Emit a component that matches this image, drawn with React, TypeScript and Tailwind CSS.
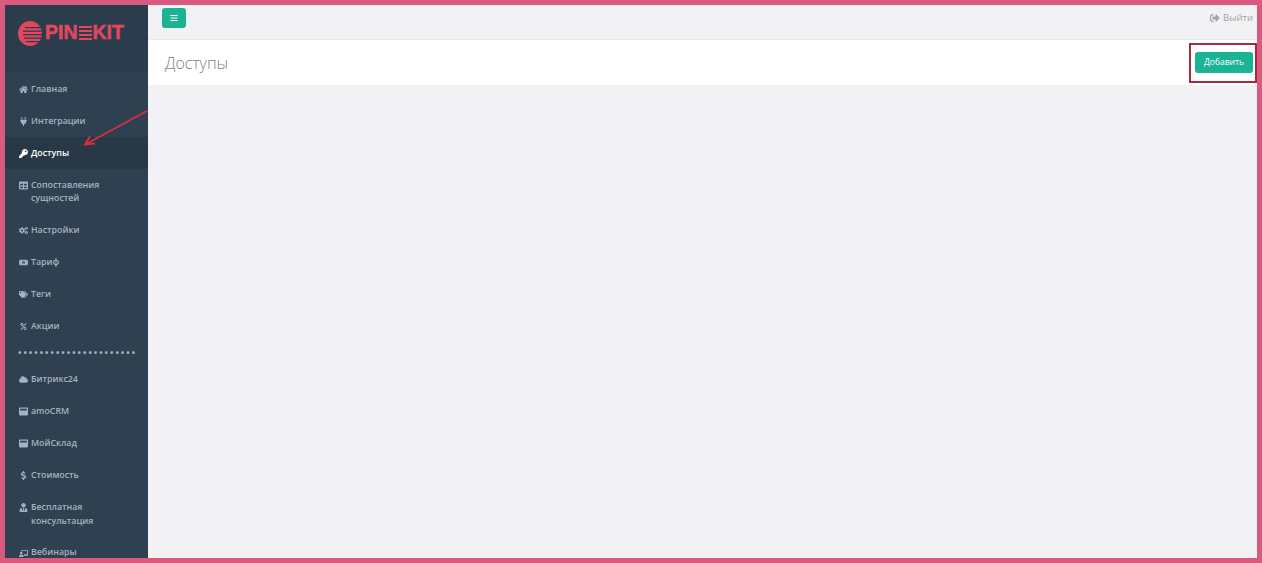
import { FaHome, FaPlug, FaKey, FaTable, FaCogs, FaMoneyBillAlt, FaTags, FaPercent, FaCloud, FaWindowMaximize, FaDollarSign, FaUserTie, FaChalkboardTeacher, FaBars, FaSignOutAlt } from "react-icons/fa";
import type { IconType } from "react-icons";

type Item = { label: string; second?: string; Icon: IconType; active?: boolean; iconSize?: number };

const topItems: Item[] = [
  { label: "Главная", Icon: FaHome },
  { label: "Интеграции", Icon: FaPlug },
  { label: "Доступы", Icon: FaKey, active: true },
  { label: "Сопоставления", second: "сущностей", Icon: FaTable },
  { label: "Настройки", Icon: FaCogs },
  { label: "Тариф", Icon: FaMoneyBillAlt },
  { label: "Теги", Icon: FaTags },
  { label: "Акции", Icon: FaPercent, iconSize: 7 },
];

const bottomItems: Item[] = [
  { label: "Битрикс24", Icon: FaCloud },
  { label: "amoCRM", Icon: FaWindowMaximize },
  { label: "МойСклад", Icon: FaWindowMaximize },
  { label: "Стоимость", Icon: FaDollarSign },
  { label: "Бесплатная", second: "консультация", Icon: FaUserTie },
  { label: "Вебинары", Icon: FaChalkboardTeacher },
];

function NavItem({ item }: { item: Item }) {
  const { Icon } = item;
  return (
    <a
      href="#"
      className={`flex items-start gap-[3px] pl-[13px] pt-[9.5px] pb-[8.5px] text-[8.8px] leading-[13.7px] font-semibold ${
        item.active ? "bg-[#293846] text-white" : "text-[#a7b1c2]"
      }`}
    >
      <span className="flex h-[14px] w-[10px] shrink-0 items-center justify-center">
        <Icon size={item.iconSize ?? 9} />
      </span>
      <span>
        {item.label}
        {item.second && <span className="block">{item.second}</span>}
      </span>
    </a>
  );
}

function Logo() {
  return (
    <div className="flex h-[68px] items-center bg-[#2b3c4c] pb-[12px] pl-[13px]">
      <svg width="24" height="25" viewBox="0 0 24 25" className="shrink-0">
        <ellipse cx="12" cy="12.5" rx="12" ry="12.5" fill="#e2475c" />
        <g fill="#2b3c4c">
          <rect x="7" y="6" width="17" height="1.2" />
          <rect x="5" y="9.5" width="19" height="1.3" />
          <rect x="5" y="13" width="19" height="1.3" />
          <rect x="6" y="16.5" width="18" height="1.3" />
          <rect x="8" y="20" width="16" height="1.2" />
        </g>
      </svg>
      <span className="ml-[3px] flex items-center font-['Liberation_Sans',sans-serif] text-[19.5px] leading-none font-bold text-[#e2475c] [-webkit-text-stroke:0.5px_#e2475c]">
        PIN
        <span className="mx-[1px] flex h-[14px] w-[13px] flex-col justify-between">
          <span className="h-[2px] bg-[#e2475c]" />
          <span className="h-[2px] bg-[#e2475c]" />
          <span className="h-[2px] bg-[#e2475c]" />
          <span className="h-[2px] bg-[#e2475c]" />
        </span>
        KIT
      </span>
    </div>
  );
}

export default function App() {
  return (
    <div className="h-[563px] w-[1262px] overflow-hidden border-[5px] border-[#d9597f] font-['Open_Sans',sans-serif]">
      <div className="relative flex h-full">
        <aside className="h-full w-[143px] shrink-0 overflow-hidden bg-[#2f4050]">
          <Logo />
          <nav>
            {topItems.map((item) => (
              <NavItem key={item.label} item={item} />
            ))}
            <div className="h-[21px] overflow-hidden pt-[6px] pl-[13px] text-[9px] leading-[9px] font-bold tracking-[2.03px] whitespace-nowrap text-[#a7b1c2]">
              ••••••••••••••••••••••
            </div>
            {bottomItems.map((item) => (
              <NavItem key={item.label} item={item} />
            ))}
          </nav>
        </aside>

        <main className="flex min-w-0 flex-1 flex-col bg-[#f2f2f5]">
          <header className="flex h-[35px] items-start justify-between border-b border-[#e7eaec] pt-[3px] pr-[4px] pl-[14px]">
            <button className="flex h-[20px] w-[24px] items-center justify-center rounded-[3px] bg-[#1ab394] text-white">
              <FaBars size={8} />
            </button>
            <a href="#" className="mt-[3px] flex items-center gap-[3px] text-[9.5px] leading-[14px] font-medium text-[#a3a5a7]">
              <FaSignOutAlt size={10} />
              Выйти
            </a>
          </header>
          <div className="flex h-[45px] items-center justify-between bg-white pr-[4px] pl-[17px]">
            <h2 className="text-[16px] font-light text-[#808285]">Доступы</h2>
            <button className="flex h-[21px] w-[58px] items-center justify-center rounded-[3px] bg-[#1ab394] text-[8.5px] font-medium text-white">
              Добавить
            </button>
          </div>
        </main>

        <div className="absolute top-[38px] left-[1184px] h-[40px] w-[68px] border-2 border-[#a8283c]" />
        <svg className="absolute top-[100px] left-[75px]" width="72" height="50" viewBox="0 0 72 50">
          <path d="M67 6 L6 39" stroke="#d8303f" strokeWidth="1.8" fill="none" />
          <path d="M15 38.5 L5 39.5 L10 31.5" stroke="#d8303f" strokeWidth="1.8" fill="none" />
        </svg>
      </div>
    </div>
  );
}
